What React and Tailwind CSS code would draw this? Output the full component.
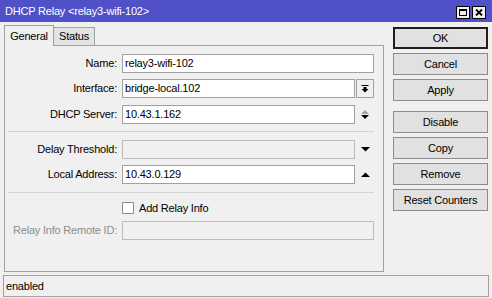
import React from 'react'

const font = { fontFamily: '"Liberation Sans", Arial, sans-serif' }

function Row({ label, value, disabled, dimLabel, icon, full, mt }) {
  return (
    <div className={`flex items-center h-[19px] ${mt}`}>
      <div className={`w-[112px] text-right ${dimLabel ? 'text-[#8d8d8d]' : 'text-black'}`}>{label}</div>
      <div
        className={`ml-[5px] h-[19px] border px-[2px] flex items-center ${
          full ? 'w-[252px]' : 'w-[233px]'
        } ${disabled ? 'bg-[#f0f0f0] border-[#bcbcbc]' : 'bg-white border-[#a0a0a0]'}`}
      >
        {value}
      </div>
      {icon && <div className="w-[18px] h-[19px] ml-px flex items-center justify-center">{icon}</div>}
    </div>
  )
}

const DropIcon = () => (
  <div className="w-[18px] h-[19px] border border-[#a0a0a0] bg-[#f0f0f0] flex items-center justify-center">
    <svg width="8" height="8" viewBox="0 0 8 8">
      <rect x="0.5" y="0" width="7" height="1" fill="#000" />
      <rect x="2.5" y="2" width="3" height="2" fill="#000" />
      <polygon points="0.5,4 7.5,4 4,7.5" fill="#000" />
    </svg>
  </div>
)

const UpDown = () => (
  <svg width="8" height="11" viewBox="0 0 8 11">
    <polygon points="0,5 8,5 4,1" fill="#a0a0a0" />
    <polygon points="0,6 8,6 4,10" fill="#000" />
  </svg>
)

const Down = () => (
  <svg width="9" height="5" viewBox="0 0 9 5">
    <polygon points="0,0 9,0 4.5,4.5" fill="#000" />
  </svg>
)

const Up = () => (
  <svg width="9" height="5" viewBox="0 0 9 5">
    <polygon points="0,5 9,5 4.5,0.5" fill="#000" />
  </svg>
)

function Btn({ children, def, mt }) {
  return (
    <div
      className={`h-[22px] w-[95px] flex items-center justify-center bg-[#e1e1e1] ${mt} ${
        def ? 'border-2 border-[#1e1e1e]' : 'border border-[#8c8c8c]'
      }`}
    >
      {children}
    </div>
  )
}

export default function App() {
  return (
    <div
      className="w-[492px] h-[298px] bg-[#f0f0f0] flex flex-col overflow-hidden text-[11px] tracking-[-0.2px] text-black"
      style={font}
    >
      {/* Title bar */}
      <div className="h-[22px] bg-[#5050c8] flex items-center pl-[5px] pr-[6px] text-white text-[11px]">
        <span className="flex-1">DHCP Relay &lt;relay3-wifi-102&gt;</span>
        <div className="flex gap-[2px] mt-[2px]">
          <div className="w-[14px] h-[13px] bg-[#f0f0f0] border border-black flex items-center justify-center">
            <div className="w-[8px] h-[7px] border border-black border-t-2" />
          </div>
          <div className="w-[14px] h-[13px] bg-[#f0f0f0] border border-black flex items-center justify-center">
            <svg width="8" height="7" viewBox="0 0 8 7">
              <path d="M1 0.5 L7 6.5 M7 0.5 L1 6.5" stroke="#000" strokeWidth="1.8" />
            </svg>
          </div>
        </div>
      </div>

      <div className="flex flex-1 min-h-0">
        {/* Tabs + panel */}
        <div className="w-[384px] pl-[4px] pt-[3px] flex flex-col">
          <div className="h-[20px] flex items-end">
            <div className="relative z-10 h-[21px] w-[50px] mb-[-1px] border border-b-0 border-[#a0a0a0] bg-[#f0f0f0] flex items-center justify-center">
              General
            </div>
            <div className="h-[18px] w-[41px] border border-b-0 border-l-0 border-[#a0a0a0] bg-[#e3e3e3] flex items-center justify-center">
              Status
            </div>
          </div>
          <div className="flex-1 border border-[#a0a0a0] bg-[#f0f0f0] flex flex-col">
            <Row mt="mt-[8px]" label="Name:" value="relay3-wifi-102" full />
            <Row mt="mt-[6px]" label="Interface:" value="bridge-local.102" icon={<DropIcon />} />
            <Row mt="mt-[7px]" label="DHCP Server:" value="10.43.1.162" icon={<UpDown />} />
            <div className="mt-[7px] ml-[3px] w-[366px] h-px bg-[#d5d5d5]" />
            <Row mt="mt-[8px]" label="Delay Threshold:" value="" disabled icon={<Down />} />
            <Row mt="mt-[6px]" label="Local Address:" value="10.43.0.129" icon={<Up />} />
            <div className="mt-[8px] ml-[3px] w-[366px] h-px bg-[#d5d5d5]" />
            <div className="mt-[9px] flex items-center h-[12px] pl-[117px]">
              <div className="w-[12px] h-[12px] bg-white border border-[#8c8c8c]" />
              <span className="ml-[5px]">Add Relay Info</span>
            </div>
            <Row mt="mt-[7px]" label="Relay Info Remote ID:" value="" disabled dimLabel full />
          </div>
        </div>

        {/* Buttons */}
        <div className="pl-[9px] pt-[5px] flex flex-col">
          <Btn def>OK</Btn>
          <Btn mt="mt-[4px]">Cancel</Btn>
          <Btn mt="mt-[4px]">Apply</Btn>
          <Btn mt="mt-[10px]">Disable</Btn>
          <Btn mt="mt-[4px]">Copy</Btn>
          <Btn mt="mt-[4px]">Remove</Btn>
          <Btn mt="mt-[4px]">Reset Counters</Btn>
        </div>
      </div>

      {/* Status bar */}
      <div className="mx-[3px] mt-[3px] mb-px h-[22px] border border-[#a0a0a0] flex items-center pl-[2px]">
        enabled
      </div>
    </div>
  )
}
